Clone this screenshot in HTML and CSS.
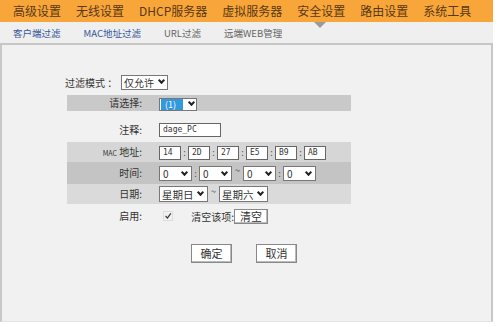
FILE: index.html
```html
<!DOCTYPE html>
<html lang="zh-CN">
<head>
    <meta charset="UTF-8">
    <title>安全设置 - MAC地址过滤</title>
    <link rel="stylesheet" href="styles.css">
</head>
<body>
    <div class="page">
        <div class="top-nav">
            <span class="nav-item">高级设置</span>
            <span class="nav-item">无线设置</span>
            <span class="nav-item">DHCP服务器</span>
            <span class="nav-item">虚拟服务器</span>
            <span class="nav-item active">安全设置</span>
            <span class="nav-item">路由设置</span>
            <span class="nav-item">系统工具</span>
        </div>
        <div class="sub-nav">
            <span class="sub-item blue">客户端过滤</span>
            <span class="sub-item blue">MAC地址过滤</span>
            <span class="sub-item">URL过滤</span>
            <span class="sub-item">远端WEB管理</span>
        </div>

        <div class="content">
            <div class="mode-line">
                <span class="mode-label">过滤模式 ：</span>
                <span class="select mode-select">仅允许<i class="arrow"></i></span>
            </div>

            <table class="form-table">
                <tr class="row-a">
                    <td class="label">请选择:</td>
                    <td><span class="select pick"><span class="picked">(1)</span><i class="arrow"></i></span></td>
                </tr>
                <tr class="row-note">
                    <td class="label">注释:</td>
                    <td><span class="input note">dage_PC</span></td>
                </tr>
                <tr class="row-c">
                    <td class="label"><small>MAC</small> 地址:</td>
                    <td>
                        <span class="input mac">14</span><span class="sep">:</span><span class="input mac">2D</span><span class="sep">:</span><span class="input mac">27</span><span class="sep">:</span><span class="input mac">E5</span><span class="sep">:</span><span class="input mac">B9</span><span class="sep">:</span><span class="input mac">AB</span>
                    </td>
                </tr>
                <tr class="row-d">
                    <td class="label">时间:</td>
                    <td>
                        <span class="select num">0<i class="arrow"></i></span><span class="sep">:</span><span class="select num">0<i class="arrow"></i></span><span class="tilde">~</span><span class="select num">0<i class="arrow"></i></span><span class="sep">:</span><span class="select num">0<i class="arrow"></i></span>
                    </td>
                </tr>
                <tr class="row-e">
                    <td class="label">日期:</td>
                    <td>
                        <span class="select day">星期日<i class="arrow"></i></span><span class="tilde">~</span><span class="select day">星期六<i class="arrow"></i></span>
                    </td>
                </tr>
                <tr class="row-f">
                    <td class="label">启用:</td>
                    <td>
                        <span class="check">
                            <svg viewBox="0 0 10 10" width="10" height="10"><path d="M2 5 L4.3 7.6 L8.5 1.8" fill="none" stroke="#333" stroke-width="1.5"></path></svg>
                        </span>
                        <span class="clear-label">清空该项:</span><span class="btn small">清空</span>
                    </td>
                </tr>
            </table>

            <div class="actions">
                <span class="btn">确定</span>
                <span class="btn">取消</span>
            </div>
        </div>
    </div>
</body>
</html>
```

FILE: styles.css
```css
* {
    margin: 0;
    padding: 0;
    box-sizing: border-box;
}

body {
    background-color: #ffffff;
    font-family: "Noto Sans CJK SC", "DejaVu Sans", sans-serif;
    color: #333;
}

.page {
    width: 493px;
}

.top-nav {
    height: 22px;
    background-color: #f8a63a;
    display: flex;
    align-items: center;
    gap: 15px;
    padding-left: 13px;
    white-space: nowrap;
}

.nav-item {
    font-size: 12px;
    color: #5a3816;
    line-height: 22px;
}

.nav-item.active {
    position: relative;
}

.nav-item.active::after {
    content: "";
    position: absolute;
    left: 17px;
    top: 22px;
    border-left: 6px solid transparent;
    border-right: 6px solid transparent;
    border-top: 6px solid #9a9a9a;
    z-index: 2;
}

.sub-nav {
    height: 23px;
    background-color: #efefef;
    border-bottom: 2px solid #c6c6c6;
    display: flex;
    align-items: center;
    gap: 23px;
    padding-left: 13px;
    white-space: nowrap;
}

.sub-item {
    font-size: 9.5px;
    color: #666;
}

.sub-item.blue {
    color: #33589a;
}

.content {
    background-color: #f1f1f1;
    border-left: 2px solid #c8c8c8;
    border-right: 2px solid #c8c8c8;
    border-bottom: 1px solid #e2e2e2;
    height: 277px;
    padding-top: 29px;
}

.mode-line {
    display: flex;
    align-items: center;
    padding-left: 63px;
    height: 16px;
    font-size: 10px;
    white-space: nowrap;
}

.mode-label {
    width: 56px;
}

.select {
    display: inline-flex;
    align-items: center;
    justify-content: space-between;
    height: 14px;
    border: 1px solid #777;
    background-color: #fff;
    font-size: 10px;
    padding: 0 2px 0 3px;
    vertical-align: middle;
    white-space: nowrap;
}

.mode-select {
    width: 47px;
    height: 15px;
    padding-left: 2px;
}

.arrow {
    display: inline-block;
    flex-shrink: 0;
    width: 5px;
    height: 5px;
    border-right: 2px solid #222;
    border-bottom: 2px solid #222;
    transform: rotate(45deg);
    margin: -3px 1px 0 3px;
}

.form-table {
    margin: 5px 0 0 65px;
    width: 284px;
    border-collapse: collapse;
    font-size: 10px;
    white-space: nowrap;
}

.form-table td {
    padding: 0;
    vertical-align: middle;
}

.form-table .label {
    width: 92px;
    text-align: right;
    padding-right: 17px;
    color: #333;
}

.label small {
    font-size: 7px;
}

.row-a { height: 15px; background-color: #c9c9c9; }
.row-note { height: 31px; }
.row-note td { padding-top: 6px; }
.row-c { height: 20px; background-color: #d6d6d6; }
.row-d { height: 22px; background-color: #c4c4c4; }
.row-e { height: 20px; background-color: #dadada; }
.row-f { height: 23px; }

.pick {
    width: 38px;
    height: 13px;
    padding: 0 1px 0 0;
}

.picked {
    background-color: #3399dd;
    color: #fff;
    width: 22px;
    height: 11px;
    line-height: 11px;
    font-size: 9px;
    padding-left: 4px;
    margin-left: 1px;
}

.input {
    display: inline-block;
    height: 14px;
    line-height: 12px;
    border: 1px solid #666;
    background-color: #fff;
    font-size: 8px;
    font-family: "DejaVu Sans Mono", monospace;
    padding-left: 3px;
    vertical-align: middle;
}

.note {
    width: 62px;
}

.mac {
    width: 22px;
}

.sep {
    display: inline-block;
    width: 7px;
    text-align: center;
    vertical-align: middle;
    font-size: 9px;
    color: #555;
}

.num {
    width: 33px;
    height: 15px;
}

.num .arrow,
.day .arrow {
    margin-right: 2px;
}

.tilde {
    display: inline-block;
    width: 11px;
    text-align: center;
    vertical-align: top;
    font-size: 9px;
}

.day {
    width: 49px;
    height: 16px;
    font-size: 10.5px;
    padding-left: 2px;
}

.check {
    display: inline-block;
    margin-left: 4px;
    vertical-align: middle;
    width: 10px;
    height: 10px;
    border: 1px solid #ddd;
}

.check svg {
    display: block;
    width: 8px;
    height: 8px;
}

.clear-label {
    display: inline-block;
    margin-left: 16px;
    vertical-align: middle;
}

.btn {
    display: inline-flex;
    align-items: center;
    justify-content: center;
    width: 41px;
    height: 19px;
    border: 1px solid #888;
    box-shadow: inset -1px -1px 0 #bbb;
    background-color: #fff;
    font-size: 11px;
    color: #333;
    vertical-align: middle;
}

.btn.small {
    width: 34px;
    height: 15px;
    font-size: 11px;
}

.actions {
    display: flex;
    gap: 24px;
    padding-left: 189px;
    margin-top: 17px;
}
```
